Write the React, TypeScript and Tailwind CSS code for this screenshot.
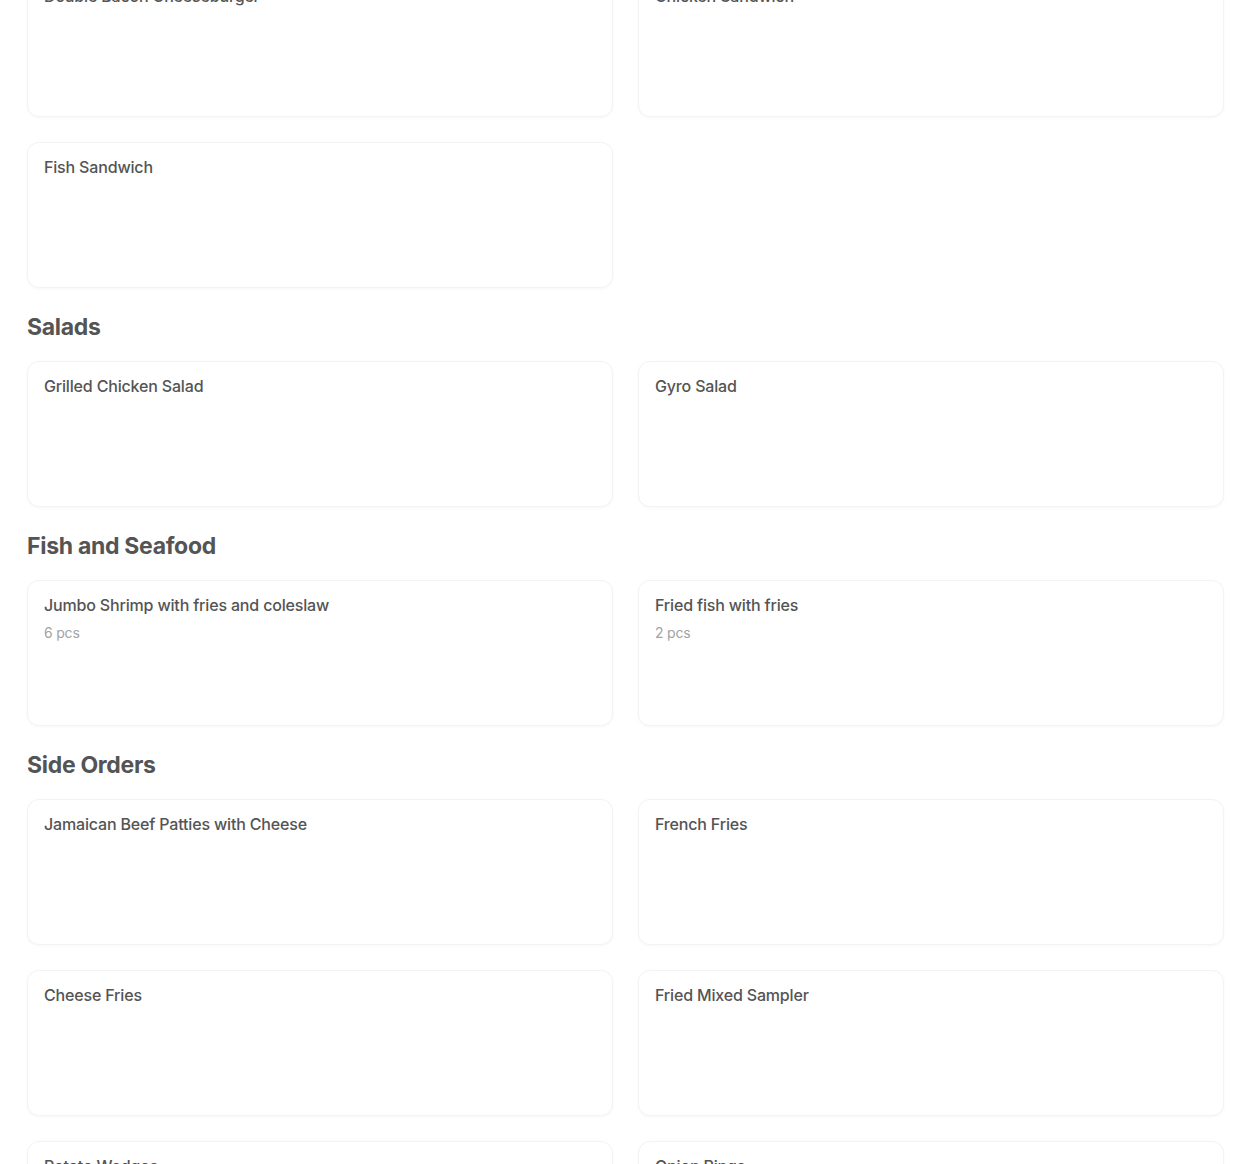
import React from 'react';

interface MenuItem {
  name: string;
  note?: string;
}

interface Section {
  title?: string;
  items: MenuItem[];
}

const sections: Section[] = [
  {
    items: [
      { name: 'Double Bacon Cheeseburger' },
      { name: 'Chicken Sandwich' },
      { name: 'Fish Sandwich' },
    ],
  },
  {
    title: 'Salads',
    items: [{ name: 'Grilled Chicken Salad' }, { name: 'Gyro Salad' }],
  },
  {
    title: 'Fish and Seafood',
    items: [
      { name: 'Jumbo Shrimp with fries and coleslaw', note: '6 pcs' },
      { name: 'Fried fish with fries', note: '2 pcs' },
    ],
  },
  {
    title: 'Side Orders',
    items: [
      { name: 'Jamaican Beef Patties with Cheese' },
      { name: 'French Fries' },
      { name: 'Cheese Fries' },
      { name: 'Fried Mixed Sampler' },
      { name: 'Potato Wedges' },
      { name: 'Onion Rings' },
    ],
  },
];

const ItemCard: React.FC<{ item: MenuItem }> = ({ item }) => (
  <div className="h-[146px] rounded-xl border border-[#f3f3f3] bg-white px-4 pt-[14px] shadow-[0_1px_3px_rgba(0,0,0,0.035)]">
    <p className="text-[16px] leading-5 font-medium tracking-[-0.17px] text-[#545454]">{item.name}</p>
    {item.note && <p className="mt-2 text-[14px] leading-5 tracking-[-0.2px] text-[#a3a3a3]">{item.note}</p>}
  </div>
);

export default function App() {
  return (
    <div className="h-[1164px] overflow-hidden bg-white font-['Inter',sans-serif]">
      <div className="-mt-[29px] px-[27px] pr-[26px]">
        {sections.map((section, i) => (
          <section key={i} className={i > 0 ? 'mt-[25px]' : ''}>
            {section.title && (
              <h2 className="mb-5 text-[23px] leading-7 font-bold tracking-[-0.3px] text-[#545454]">
                {section.title}
              </h2>
            )}
            <div className="grid grid-cols-2 gap-[25px]">
              {section.items.map((item) => (
                <ItemCard key={item.name} item={item} />
              ))}
            </div>
          </section>
        ))}
      </div>
    </div>
  );
}
